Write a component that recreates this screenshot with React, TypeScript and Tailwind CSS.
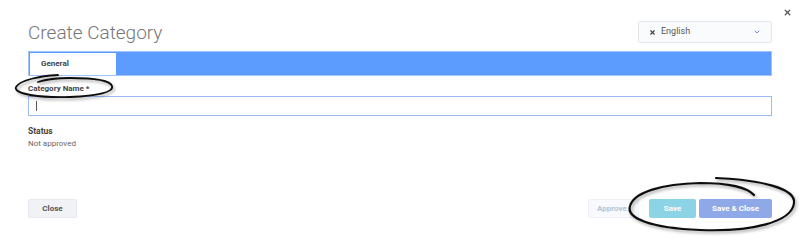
import { ChevronDown, X } from 'lucide-react';

// Hand-drawn annotation rings laid over the form
function Annotations() {
  return (
    <svg className="absolute inset-0 pointer-events-none" width={800} height={240} viewBox="0 0 800 240">
      <defs>
        <filter id="pen" x="-20%" y="-20%" width="140%" height="160%">
          <feDropShadow dx="1.5" dy="2" stdDeviation="1.4" floodColor="#000" floodOpacity="0.35" />
        </filter>
      </defs>
      <g fill="none" stroke="#111" strokeLinecap="round" filter="url(#pen)">
        <path
          d="M58 75 C40 76 20 80 16 87 C13 94 40 98 70 97 C98 96 114 92 112 86 C110 80 92 78 70 78 C55 78 44 80 38 82"
          strokeWidth={1.8}
        />
        <path
          d="M716 178 C760 180 796 188 794 203 C792 222 752 232 700 230 C650 228 626 218 630 206 C634 192 662 184 700 183 C730 183 748 188 754 195"
          strokeWidth={2.2}
        />
      </g>
    </svg>
  );
}

export default function App() {
  return (
    <div className="relative w-[800px] h-[240px] bg-white overflow-hidden font-['Roboto',sans-serif] text-[#333]">
      <button className="absolute right-[8px] top-[8px] text-[#555]">
        <X className="w-[9px] h-[9px]" strokeWidth={3.5} />
      </button>

      <div className="flex flex-col h-full px-[28px]">
        {/* Header */}
        <div className="flex items-start justify-between pt-[21px]">
          <h1 className="mt-[1px] text-[19px] font-light text-[#767676] leading-[22px]">Create Category</h1>
          <div className="w-[134px] h-[22px] border border-[#e3e6ea] rounded-[2px] bg-[#fafbfc] flex items-center pl-[10px] pr-[10px]">
            <X className="w-[7px] h-[7px] text-[#444]" strokeWidth={4} />
            <span className="ml-[5px] text-[9px] text-[#555]">English</span>
            <ChevronDown className="ml-auto w-[8px] h-[8px] text-[#6a8ff0]" strokeWidth={3} />
          </div>
        </div>

        {/* Tabs */}
        <div className="mt-[7px] h-[25px] bg-[#5c9bff] border border-[#a3c3ff] flex items-end pl-[1px]">
          <div className="w-[86px] h-[22px] bg-white flex items-center pl-[11px] text-[8px] font-bold text-[#444]">General</div>
        </div>

        {/* Form */}
        <label className="mt-[8px] text-[8px] font-bold text-[#444] leading-[10px]">Category Name *</label>
        <div className="mt-[2px] h-[20px] border border-[#9db9f5] bg-white flex items-center pl-[7px]">
          <span className="w-px h-[10px] bg-[#555]" />
        </div>

        <div className="mt-[10px] text-[8.5px] font-bold text-[#444] leading-[10px]">Status</div>
        <div className="mt-[3px] text-[8px] text-[#666] leading-[10px]">Not approved</div>

        {/* Footer */}
        <div className="mt-auto mb-[22px] flex items-center">
          <button className="w-[49px] h-[19px] rounded-[2px] bg-[#f0f2f5] border border-[#e6e9ee] text-[8px] font-bold text-[#555]">
            Close
          </button>
          <div className="ml-auto flex gap-[3px]">
            <button className="w-[51px] h-[19px] rounded-[2px] bg-[#f7f9fc] border border-[#eef1f6] text-[8px] font-bold text-[#b8c2d6] text-left pl-[8px]">
              Approve
            </button>
            <button className="ml-[7px] w-[47px] h-[19px] rounded-[2px] bg-[#8dd3e6] text-[8px] font-bold text-white">Save</button>
            <button className="w-[73px] h-[19px] rounded-[2px] bg-[#8ea8e8] text-[8px] font-bold text-white">Save &amp; Close</button>
          </div>
        </div>
      </div>

      <Annotations />
    </div>
  );
}
